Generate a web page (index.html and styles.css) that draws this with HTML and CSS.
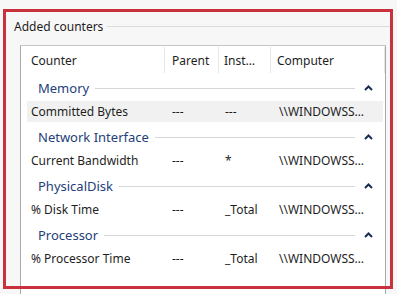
FILE: index.html
```html
<!DOCTYPE html>
<html>
<head>
    <title>Added counters</title>
    <link rel="stylesheet" href="styles.css">
</head>
<body>
    <div class="dialog">
        <div class="group-title">
            <span>Added counters</span>
            <div class="rule"></div>
        </div>

        <div class="listbox">
            <div class="row header">
                <div class="cell">Counter</div>
                <div class="cell">Parent</div>
                <div class="cell">Inst&hellip;</div>
                <div class="cell">Computer</div>
            </div>

            <div class="category">
                <span>Memory</span>
                <div class="rule"></div>
                <svg class="chevron" width="9" height="6" viewBox="0 0 9 6"><polyline points="1,5 4.5,1.5 8,5" /></svg>
            </div>
            <div class="row item hover">
                <div class="cell">Committed Bytes</div>
                <div class="cell">---</div>
                <div class="cell">---</div>
                <div class="cell">\\WINDOWSS&hellip;</div>
            </div>

            <div class="category">
                <span>Network Interface</span>
                <div class="rule"></div>
                <svg class="chevron" width="9" height="6" viewBox="0 0 9 6"><polyline points="1,5 4.5,1.5 8,5" /></svg>
            </div>
            <div class="row item">
                <div class="cell">Current Bandwidth</div>
                <div class="cell">---</div>
                <div class="cell star">*</div>
                <div class="cell">\\WINDOWSS&hellip;</div>
            </div>

            <div class="category">
                <span>PhysicalDisk</span>
                <div class="rule"></div>
                <svg class="chevron" width="9" height="6" viewBox="0 0 9 6"><polyline points="1,5 4.5,1.5 8,5" /></svg>
            </div>
            <div class="row item">
                <div class="cell">% Disk Time</div>
                <div class="cell">---</div>
                <div class="cell">_Total</div>
                <div class="cell">\\WINDOWSS&hellip;</div>
            </div>

            <div class="category">
                <span>Processor</span>
                <div class="rule"></div>
                <svg class="chevron" width="9" height="6" viewBox="0 0 9 6"><polyline points="1,5 4.5,1.5 8,5" /></svg>
            </div>
            <div class="row item">
                <div class="cell">% Processor Time</div>
                <div class="cell">---</div>
                <div class="cell">_Total</div>
                <div class="cell">\\WINDOWSS&hellip;</div>
            </div>
        </div>
    </div>

    <!-- red annotation frame drawn over the screenshot -->
    <div class="highlight"></div>
</body>
</html>
```

FILE: styles.css
```css
body {
    margin: 0;
    padding: 0;
    background-color: #f7f7f7;
    font-family: "Noto Sans", "Open Sans", sans-serif;
    font-size: 12px;
    color: #1e1e1e;
    height: 294px;
    overflow: hidden;
}

.dialog {
    padding: 18px 11px 0 20px;
}

.group-title {
    display: flex;
    align-items: center;
    height: 17px;
    margin-left: -6px;
    margin-right: -5px;
}

.group-title span {
    margin-right: 4px;
}

.rule {
    flex: 1;
    height: 1px;
    background-color: #dcdcdc;
}

.listbox {
    margin-top: 10px;
    height: 260px;
    background-color: #fff;
    border: 1px solid #a9a9a9;
    border-top-color: #c4c4c4;
    border-bottom: none;
}

.row {
    display: grid;
    grid-template-columns: 144px 54px 52px 1fr;
    align-items: center;
}

.header {
    height: 26px;
    padding-top: 1px;
}

.header .cell {
    height: 26px;
    line-height: 27px;
    border-right: 1px solid #e6e6e6;
}

.header .cell:nth-child(1) { padding-left: 10px; }
.header .cell:nth-child(2) { padding-left: 7px; }
.header .cell:nth-child(3) { padding-left: 5px; }
.header .cell:nth-child(4) { padding-left: 6px; }

.item {
    height: 21px;
    margin: 0 2px 0 6px;
}

.item .cell:nth-child(1) { padding-left: 4px; }
.item .cell:nth-child(2) { padding-left: 1px; }
.item .cell:nth-child(3) { padding-left: 0; }
.item .cell:nth-child(4) { padding-left: 2px; }
.item .star { padding-left: 2px; }

.hover {
    background-color: #f1f1f1;
}

.category {
    display: flex;
    align-items: center;
    height: 28px;
    padding: 2px 12px 0 17px;
    box-sizing: border-box;
    color: #24407a;
    font-size: 13px;
}

.category span {
    margin-right: 6px;
}

.category .rule {
    background-color: #d6d6d6;
}

.chevron {
    margin-left: 9px;
    fill: none;
    stroke: #1b2d52;
    stroke-width: 2;
}

.highlight {
    position: absolute;
    left: 3px;
    top: 9px;
    width: 384px;
    height: 274px;
    border: 3px solid #c9313d;
}
```
